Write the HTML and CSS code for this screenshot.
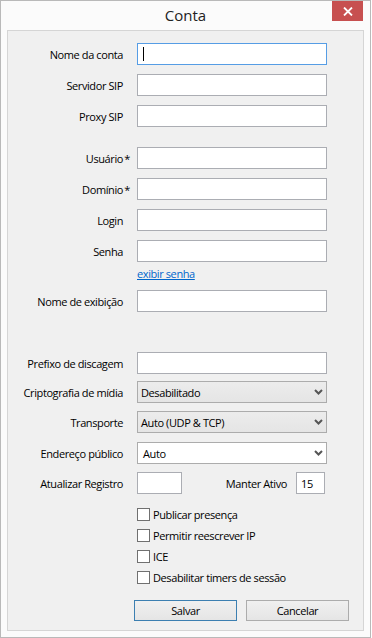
FILE: index.html
```html
<!DOCTYPE html>
<html lang="pt-BR">
<head>
    <meta charset="UTF-8">
    <meta name="viewport" content="width=device-width, initial-scale=1.0">
    <title>Conta</title>
    <link rel="stylesheet" href="styles.css">
</head>
<body>
    <div class="window">
        <div class="titlebar">
            <span></span>
            <span class="title">Conta</span>
            <button class="close" title="Fechar">
                <svg width="10" height="9" viewBox="0 0 10 9"><path d="M1 0.5 L9 8.5 M9 0.5 L1 8.5" stroke="#fff" stroke-width="1.8" fill="none"/></svg>
            </button>
        </div>

        <div class="panel">
            <div class="row">
                <label class="lbl">Nome da conta</label>
                <div class="field focus"><span class="caret"></span></div>
            </div>
            <div class="row">
                <label class="lbl">Servidor SIP</label>
                <input class="field" type="text">
            </div>
            <div class="row">
                <label class="lbl">Proxy SIP</label>
                <input class="field" type="text">
            </div>

            <div class="row gap-big">
                <label class="lbl">Usuário<span class="req">*</span></label>
                <input class="field" type="text">
            </div>
            <div class="row">
                <label class="lbl">Domínio<span class="req">*</span></label>
                <input class="field" type="text">
            </div>
            <div class="row">
                <label class="lbl">Login</label>
                <input class="field" type="text">
            </div>
            <div class="row">
                <label class="lbl">Senha</label>
                <input class="field" type="password">
            </div>
            <div class="row link-row">
                <span class="lbl"></span>
                <a class="link" href="#">exibir senha</a>
            </div>
            <div class="row">
                <label class="lbl">Nome de exibição</label>
                <input class="field" type="text">
            </div>

            <div class="row gap-huge">
                <label class="lbl">Prefixo de discagem</label>
                <input class="field" type="text">
            </div>
            <div class="row gap-7">
                <label class="lbl">Criptografia de mídia</label>
                <div class="combo">Desabilitado<svg class="chev" width="9" height="6" viewBox="0 0 9 6"><path d="M1 1 L4.5 4.5 L8 1" stroke="#555" stroke-width="2" fill="none"/></svg></div>
            </div>
            <div class="row gap-8">
                <label class="lbl">Transporte</label>
                <div class="combo">Auto (UDP &amp; TCP)<svg class="chev" width="9" height="6" viewBox="0 0 9 6"><path d="M1 1 L4.5 4.5 L8 1" stroke="#555" stroke-width="2" fill="none"/></svg></div>
            </div>
            <div class="row">
                <label class="lbl">Endereço público</label>
                <div class="combo editable">Auto<svg class="chev" width="9" height="6" viewBox="0 0 9 6"><path d="M1 1 L4.5 4.5 L8 1" stroke="#555" stroke-width="2" fill="none"/></svg></div>
            </div>
            <div class="row gap-8">
                <label class="lbl">Atualizar Registro</label>
                <input class="field short" type="text">
                <label class="keep-lbl">Manter Ativo</label>
                <input class="field tiny" type="text" value="15">
            </div>

            <div class="checks">
                <label class="check"><span class="box"></span>Publicar presença</label>
                <label class="check"><span class="box"></span>Permitir reescrever IP</label>
                <label class="check"><span class="box"></span>ICE</label>
                <label class="check"><span class="box"></span>Desabilitar timers de sessão</label>
            </div>

            <div class="buttons">
                <button class="btn primary">Salvar</button>
                <button class="btn">Cancelar</button>
            </div>
        </div>
    </div>
</body>
</html>
```

FILE: styles.css
```css
body {
    margin: 0;
    font-family: "Open Sans", sans-serif;
    font-size: 11px;
    letter-spacing: -0.4px;
    color: #000;
    background: #fff;
}
.window {
    width: 371px;
    height: 638px;
    box-sizing: border-box;
    border: 1px solid #b9b9b9;
    background: #fbfbfb;
    padding: 0 6px 6px;
    display: flex;
    flex-direction: column;
}
.titlebar {
    height: 29px;
    display: grid;
    grid-template-columns: 1fr auto 1fr;
    align-items: start;
}
.title {
    font-size: 15px;
    line-height: 29px;
    letter-spacing: 0;
    color: #222;
}
.close {
    justify-self: end;
    width: 31px;
    height: 20px;
    margin-right: 1px;
    border: none;
    padding: 0;
    background: #c75050;
    display: flex;
    align-items: center;
    justify-content: center;
}
.panel {
    flex: 1;
    border: 1px solid #d5d5d5;
    background: #f0f0f0;
    padding-top: 12px;
}
.row {
    display: flex;
    align-items: center;
    height: 22px;
    margin-top: 9px;
}
.row:first-child {
    margin-top: 0;
}
.gap-big { margin-top: 20px; }
.gap-huge { margin-top: 40px; }
.gap-7 { margin-top: 7px; }
.gap-8 { margin-top: 8px; }
.lbl {
    width: 115px;
    margin-right: 14px;
    text-align: right;
    white-space: nowrap;
}
.req {
    display: inline-block;
    width: 7px;
    margin-right: -7px;
    text-align: right;
}
.field {
    width: 190px;
    height: 22px;
    box-sizing: border-box;
    border: 1px solid #abadb3;
    background: #fff;
    margin: 0;
    padding: 0 4px;
    font: inherit;
    letter-spacing: inherit;
    outline: none;
}
.field.focus {
    border-color: #569de5;
    display: flex;
    align-items: center;
    padding-left: 5px;
}
.caret {
    width: 1px;
    height: 14px;
    background: #000;
}
.field.short { width: 45px; }
.field.tiny { width: 29px; }
.keep-lbl {
    width: 105px;
    margin-right: 9px;
    text-align: right;
}
.link-row {
    height: 16px;
    margin-top: 3px;
}
.link {
    color: #0066cc;
    text-decoration: underline;
}
.combo {
    width: 190px;
    height: 22px;
    box-sizing: border-box;
    border: 1px solid #acacac;
    background: linear-gradient(#ececec, #e5e5e5);
    padding: 0 3px;
    display: flex;
    align-items: center;
    justify-content: space-between;
}
.combo.editable {
    background: #fff;
    padding-left: 5px;
}
.checks {
    margin-top: 10px;
    padding-left: 129px;
}
.check {
    display: flex;
    align-items: center;
    height: 21px;
}
.box {
    width: 13px;
    height: 13px;
    box-sizing: border-box;
    border: 1px solid #707070;
    background: #fff;
    margin-right: 3px;
}
.buttons {
    display: flex;
    gap: 9px;
    margin-top: 12px;
    padding-left: 126px;
}
.btn {
    width: 103px;
    height: 21px;
    border: 1px solid #acacac;
    background: linear-gradient(#f0f0f0, #e5e5e5);
    font: inherit;
    letter-spacing: inherit;
    color: #000;
    padding: 0;
}
.btn.primary {
    border-color: #3c7fb1;
}
```
